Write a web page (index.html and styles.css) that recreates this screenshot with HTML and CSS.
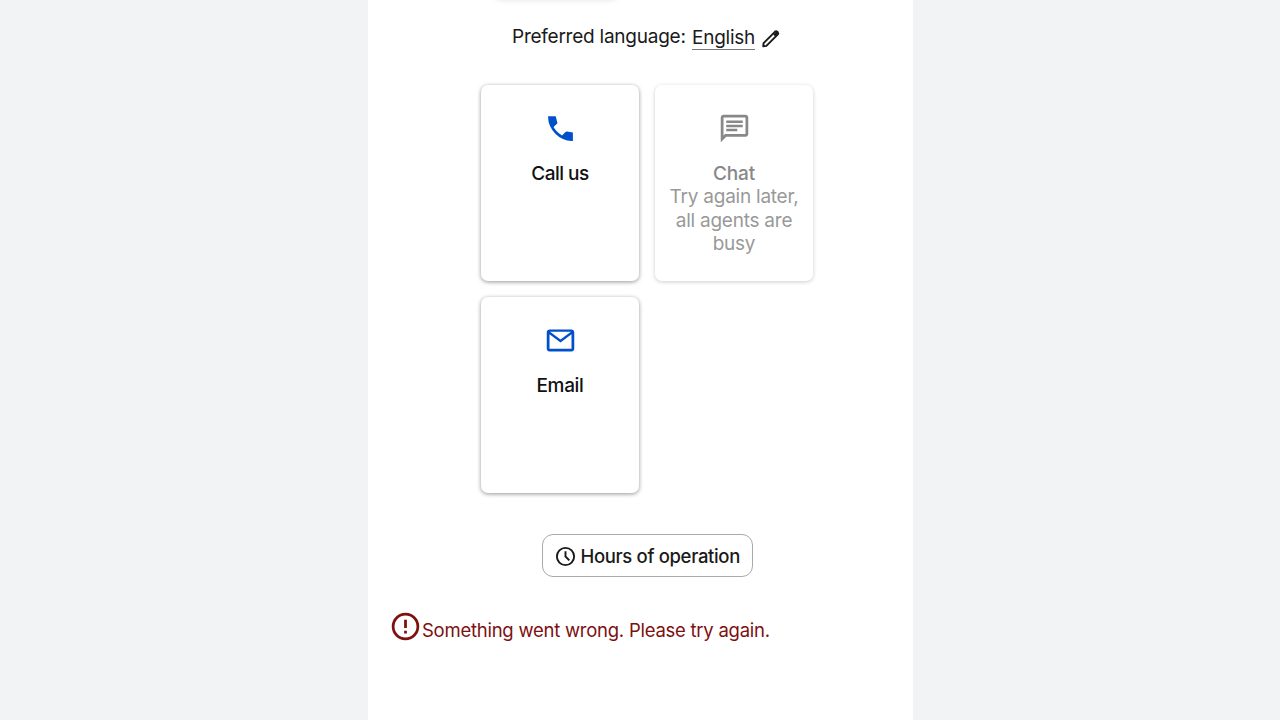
FILE: index.html
```
<!DOCTYPE html>
<html lang="en">

<head>
  <meta charset="UTF-8">
  <meta name="viewport" content="width=device-width, initial-scale=1.0">
  <title>Contact us</title>
  <link rel="stylesheet" href="styles.css">
</head>

<body>
  <main class="panel">
    <div class="step-card"></div>

    <div class="language">
      <span class="language-label">Preferred language:</span>
      <a class="language-value">English</a>
      <svg class="icon-edit" viewBox="0 0 24 24" fill="none" stroke="currentColor" stroke-width="2" stroke-linejoin="round">
        <path d="M4.400 20.200l.4-3.400L16.800 4.800q1.100-.9 2.200.1l.6.6q1 1.100.1 2.200L7.700 19.700z" />
        <path d="M16.400 6.200l2 2" stroke-width="4.500" />
      </svg>
    </div>

    <div class="options">
      <button class="option">
        <svg class="option-icon" viewBox="0 0 24 24" fill="currentColor">
          <path d="M19.95 21q-3.125 0-6.175-1.363t-5.55-3.862-3.862-5.55T3 4.05V3H8.500l1.300 5.200L6.975 10.9q.5.925 1.188 1.787t1.512 1.663q.775.775 1.625 1.437t1.8 1.213l2.35-2.35q.225-.225.588-.337t.712-.063L21 14.900V21z" />
        </svg>
        <span class="option-title call-title">Call us</span>
      </button>
      <button class="option disabled" disabled>
        <svg class="option-icon" viewBox="0 0 24 24" fill="currentColor">
          <path d="M6 14h8v-1.8H6zm0-3h12V9.200H6zm0-3h12V6.200H6zM2 22V4q0-.825.588-1.412T4 2h16q.825 0 1.413.588T22 4v12q0 .825-.587 1.413T20 18H6zm3.150-6H20V4H4v13.125z" />
        </svg>
        <span class="option-title">Chat</span>
        <span class="option-text">Try again later, all agents are busy</span>
      </button>
      <button class="option">
        <svg class="option-icon" viewBox="0 0 24 24" fill="currentColor">
          <path d="M4 20q-.825 0-1.412-.587T2 18V6q0-.825.588-1.412T4 4h16q.825 0 1.413.588T22 6v12q0 .825-.587 1.413T20 20zm8-6.500L4 7.500V18h16V7.500zm0-2.300L19.600 5.700H4.400z" />
        </svg>
        <span class="option-title">Email</span>
      </button>
    </div>

    <button class="hours">
      <svg class="icon-clock" viewBox="0 0 24 24" fill="none" stroke="currentColor" stroke-width="2">
        <circle cx="12" cy="12" r="9" />
        <path d="M12 6.500v5.500l4 4" />
      </svg>
      <span class="hours-text">Hours of operation</span>
    </button>

    <div class="error">
      <svg class="icon-error" viewBox="0 0 24 24" fill="none" stroke="currentColor" stroke-width="2">
        <circle cx="12" cy="12" r="9" />
        <path d="M12 7v6M12 15v2" />
      </svg>
      <span class="error-text">Something went wrong. Please try again.</span>
    </div>
  </main>
</body>

</html>
```
FILE: styles.css
```
* {
  box-sizing: border-box;
}

body {
  margin: 0;
  background-color: #f1f3f4;
  font-family: Inter, "Open Sans", sans-serif;
  font-size: 19px;
  line-height: 23.4px;
  letter-spacing: -0.24px;
  color: #1a1a1a;
}

svg {
  display: block;
  flex: none;
}

button {
  font: inherit;
  letter-spacing: inherit;
  color: inherit;
  border: none;
  background-color: #fff;
}

/* white column in the middle of the page */
.panel {
  width: 545px;
  height: 720px;
  margin-left: 368px;
  padding-left: 24px;
  background-color: #fff;
  overflow: hidden;
}

/* previous step, scrolled out of view */
.step-card {
  width: 122px;
  height: 40px;
  margin: -42px 0 0 103px;
  border-radius: 7px;
  box-shadow: 0 1px 6px rgba(60, 64, 67, 0.2);
}

/* language row */
.language {
  display: flex;
  align-items: flex-start;
  margin: 26px 0 0 120px;
  height: 61px;
}

.language-label {
  width: 180px;
  padding-top: 1px;
  white-space: nowrap;
}

.language-value {
  margin-top: 2px;
  height: 24px;
  width: 63px;
  border-bottom: 1px solid #777;
}

.icon-edit {
  width: 23px;
  height: 23px;
  margin: 3px 0 0 4px;
}

/* contact options */
.options {
  display: grid;
  grid-template-columns: 158px 158px;
  grid-auto-rows: 196px;
  gap: 16px;
  margin-left: 89px;
}

.option {
  display: flex;
  flex-direction: column;
  align-items: center;
  padding: 27px 10px 0;
  border-radius: 7px;
  box-shadow: 0 1px 4px rgba(0, 0, 0, 0.42);
  color: #111;
}

.option-icon {
  width: 33px;
  height: 33px;
  margin-bottom: 17px;
  color: #0050cc;
}

.option-title {
  font-weight: 500;
  letter-spacing: -0.35px;
}

.call-title {
  letter-spacing: -0.5px;
}

.disabled,
.disabled .option-icon {
  color: #888;
}

.disabled {
  box-shadow: 0 1px 4px rgba(0, 0, 0, 0.2);
}

.disabled .option-title {
  letter-spacing: -0.1px;
}

.option-text {
  color: #999;
}

/* opening hours button */
.hours {
  display: flex;
  align-items: center;
  width: 211px;
  height: 43px;
  margin: 41px 0 0 149.5px;
  padding: 2px 0 0 11px;
  border: 1px solid #aaa;
  border-radius: 11px;
  font-size: 18.5px;
  font-weight: 500;
  letter-spacing: -0.34px;
}

.hours-text {
  margin-left: 4px;
  white-space: nowrap;
}

.icon-clock {
  width: 23px;
  height: 23px;
}

/* error message */
.error {
  display: flex;
  margin-top: 33px;
  color: #7d1010;
  font-size: 18.5px;
  letter-spacing: -0.25px;
}

.icon-error {
  width: 33px;
  height: 33px;
  margin-left: -3px;
}

.error-text {
  padding-top: 9px;
  white-space: nowrap;
}
```
